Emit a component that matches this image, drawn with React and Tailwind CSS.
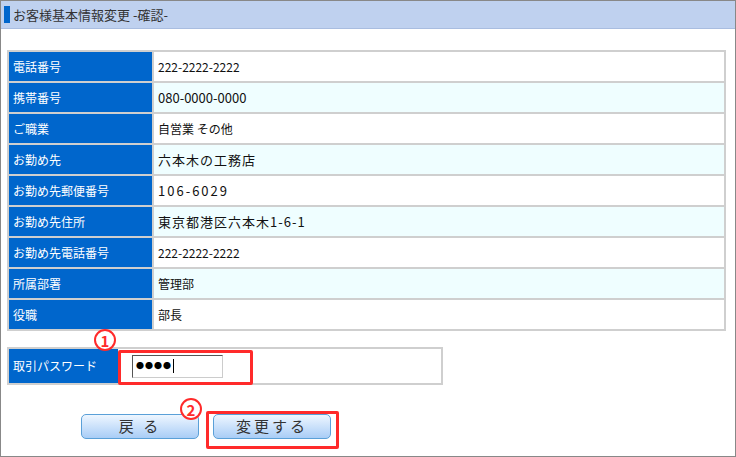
export default function App() {
  const rows = [
    ["電話番号", "222-2222-2222", false, ""],
    ["携帯番号", "080-0000-0000", true, "text-[#3b3a70] text-[13px]"],
    ["ご職業", "自営業  その他", false, ""],
    ["お勤め先", "六本木の工務店", true, "text-[13px] tracking-[1px]"],
    ["お勤め先郵便番号", "106-6029", false, "text-[13px] tracking-[2px]"],
    ["お勤め先住所", "東京都港区六本木1-6-1", true, "text-[13px] tracking-[1px]"],
    ["お勤め先電話番号", "222-2222-2222", false, "pl-[3px]"],
    ["所属部署", "管理部", true, ""],
    ["役職", "部長", false, ""],
  ];
  const font = { fontFamily: '"Noto Sans CJK JP", "Liberation Sans", sans-serif' };
  return (
    <div className="w-[736px] h-[457px] border border-[#888] bg-white relative overflow-hidden" style={font}>
      <div className="h-[28px] bg-[#bfd1ef] border-b border-[#a9bde0] flex items-center pl-[3px]">
        <div className="w-[6px] h-[17px] bg-[#0066cc]"></div>
        <span className="ml-[3px] text-[13px] text-[#333]">お客様基本情報変更 -確認-</span>
      </div>
      <div className="mt-[21px] ml-[6px] w-[719px] border-2 border-[#cfcfcf] bg-[#cfcfcf] flex flex-col gap-[2px]">
        {rows.map(([l, v, alt, cls]) => (
          <div key={l} className="flex h-[29px] gap-[2px]">
            <div className="w-[143px] bg-[#0066cc] text-white text-[12px] flex items-center pl-[4px]">{l}</div>
            <div className={`flex-1 ${alt ? "bg-[#effeff]" : "bg-white"} flex items-center pl-[4px] text-[12px] text-[#111] ${cls}`}>{v}</div>
          </div>
        ))}
      </div>
      <div className="mt-[16px] ml-[6px] w-[436px] h-[38px] border-2 border-[#cfcfcf] flex">
        <div className="w-[109px] bg-[#0066cc] text-white text-[12px] flex items-center pl-[4px]">取引パスワード</div>
        <div className="flex items-center pl-[14px]">
          <div className="w-[91px] h-[23px] border border-[#555] border-r-[#ccc] border-b-[#ccc] flex items-center pl-[3px] text-[8px] gap-[1px]"><span>●</span><span>●</span><span>●</span><span>●</span><span className="w-[1px] h-[14px] bg-black ml-[1px]"></span></div>
        </div>
      </div>
      <div className="mt-[29px] flex gap-[14px] pl-[80px]">
        {["戻 る", "変更する"].map((t) => (
          <div key={t} className="w-[118px] h-[25px] rounded-[5px] border border-[#5aa0d8] bg-gradient-to-b from-[#eef6ff] to-[#a9cdf6] flex items-center justify-center text-[15px] text-[#333] tracking-[3px]">{t}</div>
        ))}
      </div>
      <div className="absolute left-[117px] top-[349px] w-[135px] h-[35px] border-[3px] border-[#ff2a2a] rounded-[2px]"></div>
      <div className="absolute left-[205px] top-[410px] w-[133px] h-[38px] border-[3px] border-[#ff2a2a] rounded-[2px]"></div>
      <div className="absolute left-[93px] top-[328px] w-[22px] h-[22px] rounded-full border-2 border-[#ff2a2a] bg-white text-[#ff2a2a] text-[15px] font-bold flex items-center justify-center leading-none">1</div>
      <div className="absolute left-[179px] top-[397px] w-[22px] h-[22px] rounded-full border-2 border-[#ff2a2a] bg-white text-[#ff2a2a] text-[15px] font-bold flex items-center justify-center leading-none">2</div>
    </div>
  );
}
